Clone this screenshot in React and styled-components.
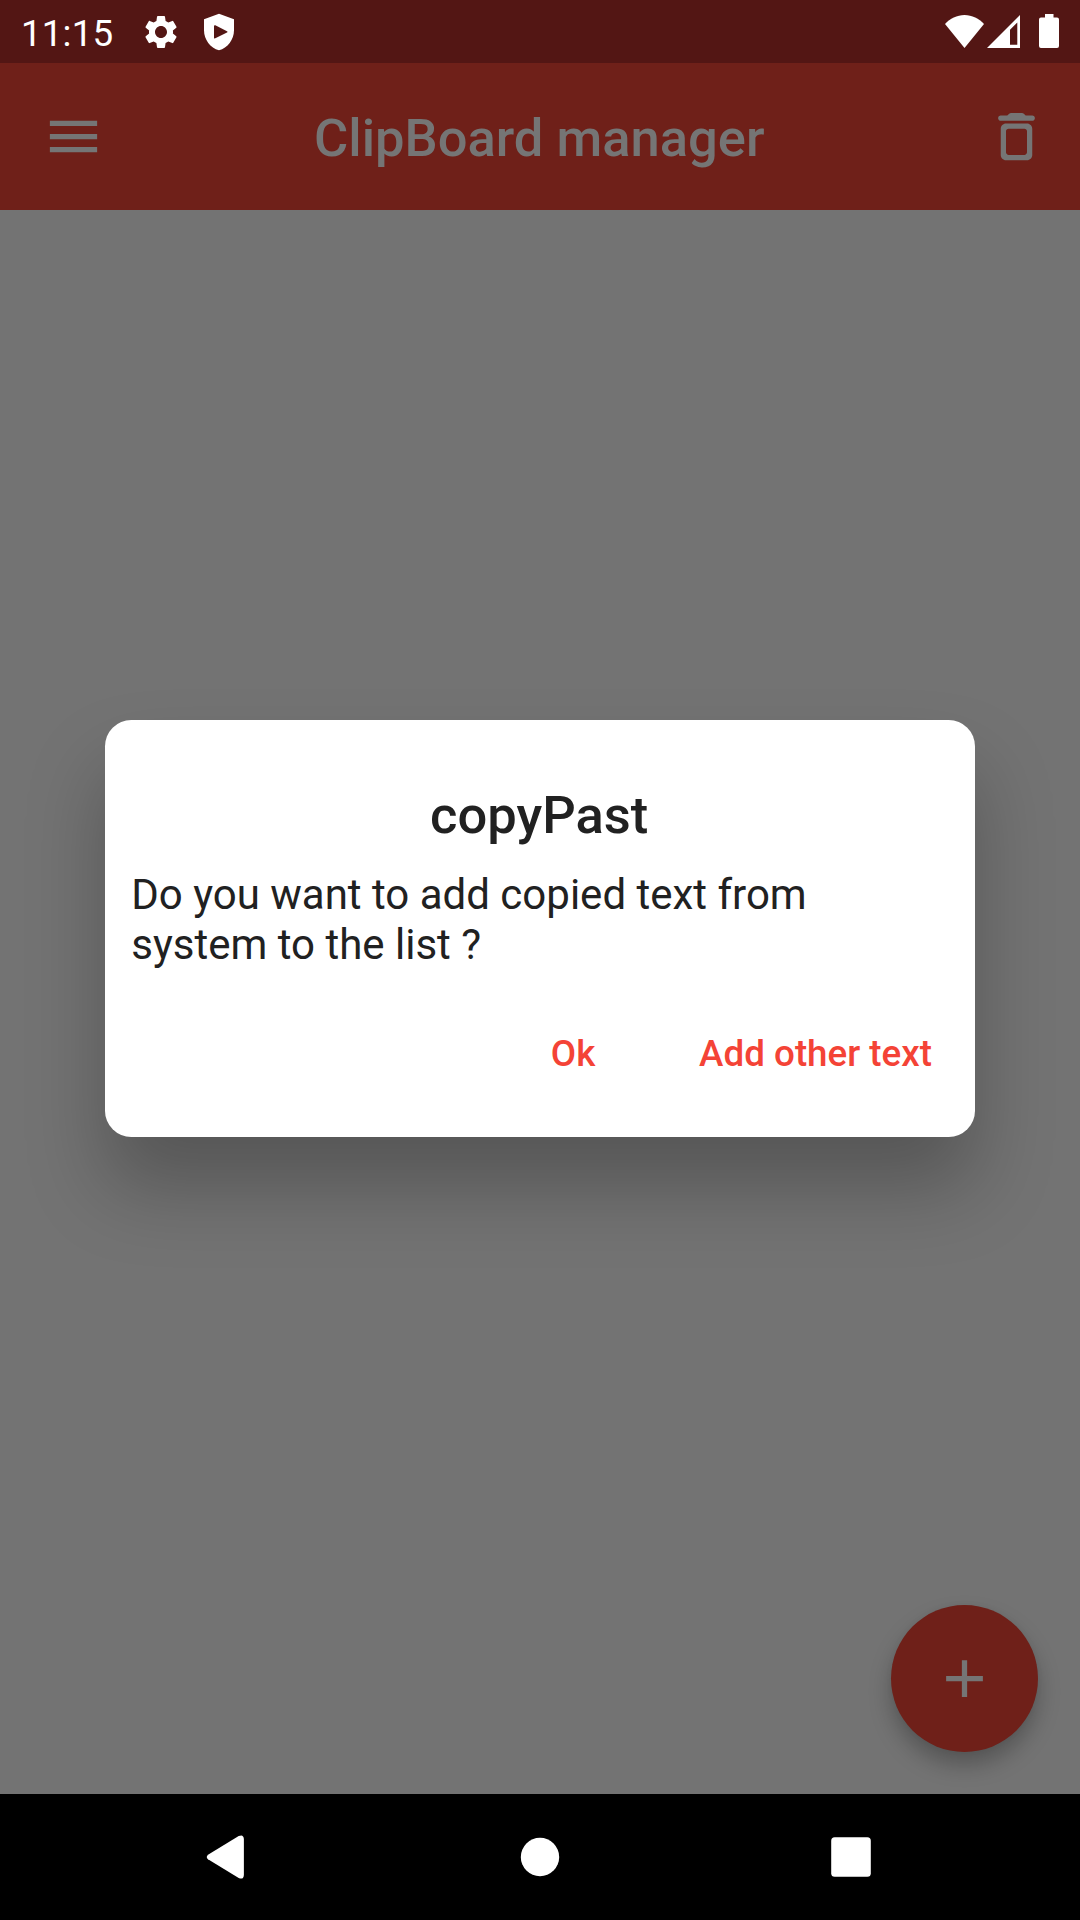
import React from 'react';
import styled, { createGlobalStyle } from 'styled-components';

const GlobalStyle = createGlobalStyle`
  body { margin: 0; background: #000; }
  * { box-sizing: border-box; }
  button { border: 0; padding: 0; margin: 0; background: none; font: inherit; color: inherit; }
`;

const Screen = styled.div`
  position: relative;
  display: flex;
  flex-direction: column;
  width: 1080px;
  height: 1920px;
  overflow: hidden;
  font-family: Roboto, sans-serif;
  background: #737373;
`;

const StatusBar = styled.header`
  display: flex;
  align-items: center;
  flex: none;
  height: 63px;
  padding: 0 21px 0 21px;
  color: #fff;
  background: #531614;
`;

const Clock = styled.time`
  width: 120px;
  font-size: 36.75px;
  line-height: 43px;
  letter-spacing: 0.15px;
  padding-top: 3px;
`;

const StatusIcons = styled.div`
  display: flex;
  align-items: center;
  gap: ${(p) => p.$gap}px;
  margin-left: ${(p) => (p.$end ? 'auto' : 0)};
  padding-bottom: ${(p) => (p.$end ? 1 : 0)}px;
`;

const Icon = styled.svg`
  display: block;
  flex: none;
  width: ${(p) => p.$w}px;
  height: ${(p) => p.$h || p.$w}px;
  fill: currentColor;
`;

const AppBar = styled.div`
  display: flex;
  align-items: center;
  justify-content: space-between;
  flex: none;
  height: 147px;
  padding: 0 31.5px 0 42px;
  color: #757575;
  background: #6f2019;
`;

const IconButton = styled.button`
  display: block;
`;

const AppTitle = styled.h1`
  margin: 2px 0 0 -12px;
  font-size: 52.5px;
  font-weight: 500;
  line-height: 62px;
  white-space: nowrap;
`;

const Body = styled.main`
  display: flex;
  flex: 1;
  align-items: flex-end;
  justify-content: flex-end;
  padding: 42px;
`;

const Fab = styled.button`
  display: flex;
  align-items: center;
  justify-content: center;
  width: 147px;
  height: 147px;
  border-radius: 50%;
  color: #757575;
  background: #6f2019;
  box-shadow: 0 13px 22px rgba(0, 0, 0, 0.26), 0 0 6px rgba(0, 0, 0, 0.04);
`;

const NavBar = styled.nav`
  position: relative;
  display: flex;
  align-items: center;
  justify-content: center;
  gap: 248px;
  flex: none;
  height: 126px;
  color: #fff;
  background: #000;
`;

const Overlay = styled.div`
  position: absolute;
  inset: 63px 0 126px;
  display: flex;
  align-items: center;
  justify-content: center;
  pointer-events: none;
`;

const Dialog = styled.section`
  display: flex;
  flex-direction: column;
  width: 870px;
  height: 417px;
  padding: 64px 22px 0 26.25px;
  border-radius: 26.25px;
  color: #212121;
  background: #fff;
  box-shadow: 0 50px 78px rgba(0, 0, 0, 0.25);
`;

const DialogTitle = styled.h2`
  margin: 0 6px 0 0;
  font-size: 52.5px;
  font-weight: 500;
  line-height: 62px;
  text-align: center;
`;

const Message = styled.p`
  margin: 24px 0 0;
  font-size: 42px;
  line-height: 50px;
`;

const Actions = styled.div`
  display: flex;
  justify-content: flex-end;
  gap: 21px;
  margin-top: 36px;
`;

const TextButton = styled.button`
  min-width: 168px;
  height: 94px;
  padding: 0 21px;
  font-size: 36.75px;
  font-weight: 500;
  white-space: nowrap;
  color: #f44336;
`;

export default function App() {
  return (
    <Screen>
      <GlobalStyle />
      <StatusBar>
        <Clock>11:15</Clock>
        <StatusIcons $gap={18}>
          <Icon $w={40} viewBox="0 0 24 24">
            <path d="M19.14 12.94c.04-.3.06-.61.06-.94 0-.32-.02-.64-.07-.94l2.03-1.58a.49.49 0 0 0 .12-.61l-1.92-3.32a.488.488 0 0 0-.59-.22l-2.39.96c-.5-.38-1.03-.7-1.62-.94l-.36-2.54a.484.484 0 0 0-.48-.41h-3.84c-.24 0-.43.17-.47.41l-.36 2.54c-.59.24-1.13.57-1.62.94l-2.39-.96c-.22-.08-.47 0-.59.22L2.74 8.87c-.12.21-.08.47.12.61l2.03 1.58c-.05.3-.09.63-.09.94s.02.64.07.94l-2.03 1.58a.49.49 0 0 0-.12.61l1.92 3.32c.12.22.37.29.59.22l2.39-.96c.5.38 1.03.7 1.62.94l.36 2.54c.05.24.24.41.48.41h3.84c.24 0 .44-.17.47-.41l.36-2.54c.59-.24 1.13-.56 1.62-.94l2.39.96c.22.08.47 0 .59-.22l1.92-3.32c.12-.22.07-.47-.12-.61l-2.01-1.58zM12 15.6c-1.98 0-3.6-1.62-3.6-3.6s1.62-3.6 3.6-3.6 3.6 1.62 3.6 3.6-1.62 3.6-3.6 3.6z" />
          </Icon>
          <Icon $w={40} viewBox="0 0 24 24">
            <path
              fillRule="evenodd"
              d="M12 1 3 4.4V11c0 5.55 3.84 10.74 9 12 5.16-1.26 9-6.45 9-12V4.4zM9 8.4c0-.5.4-.6.8-.4l7 3.5c.4.2.4.6 0 .8l-7 3.5c-.4.2-.8.1-.8-.4z"
            />
          </Icon>
        </StatusIcons>
        <StatusIcons $gap={3} $end>
          <Icon $w={39} $h={33} viewBox="0 0 39 33">
            <path d="M19.5 33 0 9C5 3.500 12 0 19.500 0S34 3.500 39 9z" />
          </Icon>
          <Icon $w={33} $h={33} viewBox="0 0 33 33">
            <path fillRule="evenodd" d="M33 0V33H0zM30.300 7.500 23 14.800V29.700H30.300z" />
          </Icon>
          <Icon $w={36} $h={34} viewBox="0 0 36 34">
            <path d="M22 0h8.500v3.500H34a2 2 0 0 1 2 2V32a2 2 0 0 1-2 2H18a2 2 0 0 1-2-2V5.500a2 2 0 0 1 2-2h4z" />
          </Icon>
        </StatusIcons>
      </StatusBar>

      <AppBar>
        <IconButton aria-label="Menu">
          <Icon $w={63} viewBox="0 0 24 24">
            <path d="M3 18h18v-2H3v2zm0-5h18v-2H3v2zm0-7v2h18V6H3z" />
          </Icon>
        </IconButton>
        <AppTitle>ClipBoard manager</AppTitle>
        <IconButton aria-label="Delete">
          <Icon $w={63} viewBox="0 0 24 24">
            <path d="M6 19c0 1.100.900 2 2 2h8c1.100 0 2-.900 2-2V9c0-1.100-.900-2-2-2H8c-1.100 0-2 .900-2 2v10zM9 9h6c.55 0 1 .45 1 1v8c0 .55-.45 1-1 1H9c-.55 0-1-.45-1-1v-8c0-.55.45-1 1-1zm6.500-5-.71-.71c-.18-.18-.44-.29-.7-.29H9.910c-.26 0-.52.11-.7.29L8.500 4H6c-.55 0-1 .45-1 1s.45 1 1 1h12c.55 0 1-.45 1-1s-.45-1-1-1h-2.500z" />
          </Icon>
        </IconButton>
      </AppBar>

      <Body>
        <Fab aria-label="Add">
          <Icon $w={63} viewBox="0 0 24 24">
            <path d="M19 13h-6v6h-2v-6H5v-2h6V5h2v6h6v2z" />
          </Icon>
        </Fab>
      </Body>

      <Overlay>
        <Dialog>
          <DialogTitle>copyPast</DialogTitle>
          <Message>
            Do you want to add copied text from
            <br />
            system to the list ?
          </Message>
          <Actions>
            <TextButton>Ok</TextButton>
            <TextButton>Add other text</TextButton>
          </Actions>
        </Dialog>
      </Overlay>

      <NavBar>
        <Icon $w={63} viewBox="0.5 0.5 63 63">
          <path d="M10.500 29.200 41.200 10.600Q45.900 8.300 46.400 13.500V49.500Q45.900 54.700 41.200 52.400L10.500 33.800Q8 31.500 10.500 29.200z" />
        </Icon>
        <Icon $w={63} viewBox="0.5 0.5 63 63">
          <circle cx="31.500" cy="31.500" r="19.200" />
        </Icon>
        <Icon $w={63} viewBox="0.5 0.5 63 63">
          <rect x="11.700" y="11.700" width="39.600" height="39.600" rx="3.500" />
        </Icon>
      </NavBar>
    </Screen>
  );
}
